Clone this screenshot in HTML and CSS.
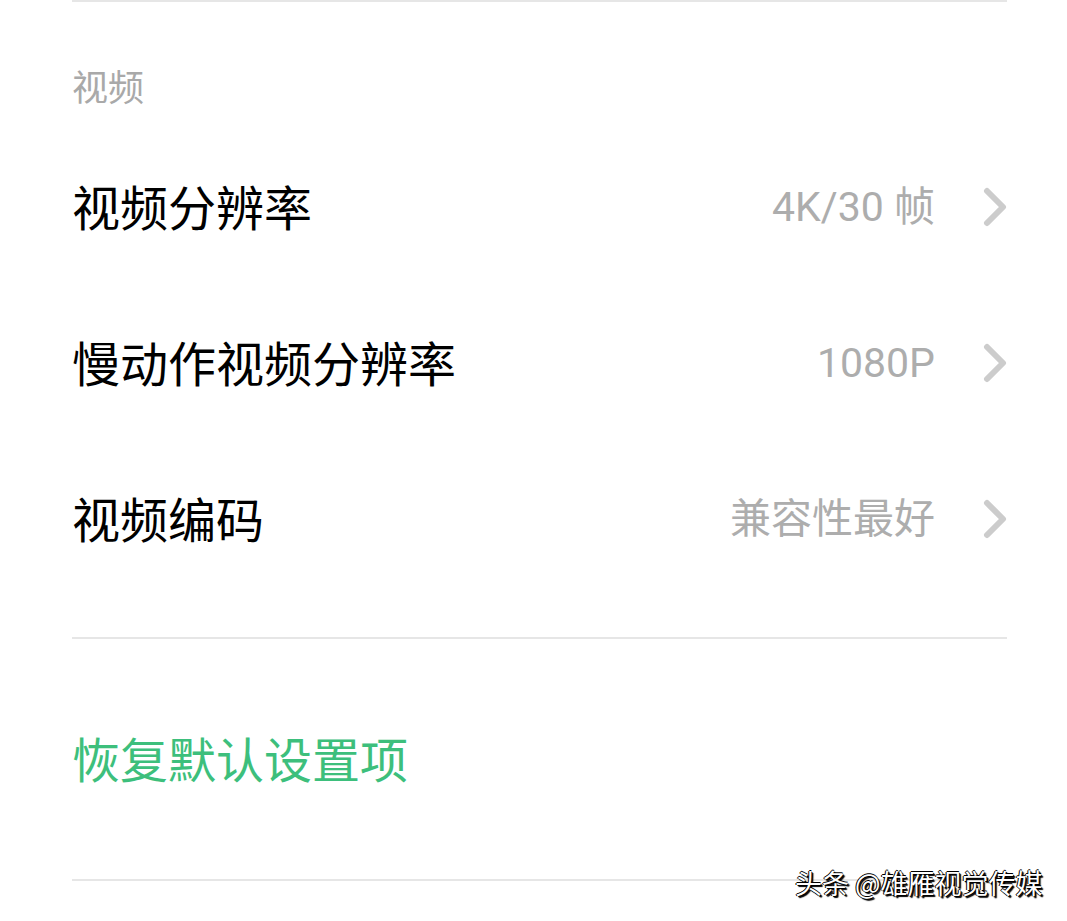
FILE: index.html
```html
<!DOCTYPE html>
<html lang="zh">
<head>
<meta charset="utf-8">
<link rel="stylesheet" href="styles.css">
</head>
<body>
<div class="page">
  <div class="rule"></div>
  <div class="section-title">视频</div>
  <div class="row">
    <span class="label">视频分辨率</span>
    <span class="value">4K/30 帧</span>
    <svg class="chev" viewBox="0 0 24 40" width="24" height="40"><polyline points="4,4 20,20 4,36" fill="none" stroke="#cccccc" stroke-width="6" stroke-linecap="round" stroke-linejoin="round"/></svg>
  </div>
  <div class="row">
    <span class="label">慢动作视频分辨率</span>
    <span class="value">1080P</span>
    <svg class="chev" viewBox="0 0 24 40" width="24" height="40"><polyline points="4,4 20,20 4,36" fill="none" stroke="#cccccc" stroke-width="6" stroke-linecap="round" stroke-linejoin="round"/></svg>
  </div>
  <div class="row">
    <span class="label">视频编码</span>
    <span class="value">兼容性最好</span>
    <svg class="chev" viewBox="0 0 24 40" width="24" height="40"><polyline points="4,4 20,20 4,36" fill="none" stroke="#cccccc" stroke-width="6" stroke-linecap="round" stroke-linejoin="round"/></svg>
  </div>
  <div class="spacer"></div>
  <div class="rule"></div>
  <div class="restore">恢复默认设置项</div>
  <div class="rule"></div>
</div>
<div class="watermark">头条 @雄雁视觉传媒</div>
</body>
</html>
```
FILE: styles.css
```css
html, body {
  margin: 0;
  padding: 0;
  background: #ffffff;
}
body {
  font-family: "Noto Sans CJK SC", "Noto Sans", sans-serif;
  width: 1067px;
  height: 921px;
  overflow: hidden;
  position: relative;
}
.page {
  padding: 0 60px 0 72px;
}
.rule {
  height: 2px;
  background: #e6e6e6;
}
.section-title {
  height: 127px;
  box-sizing: border-box;
  padding-top: 58px;
  font-size: 36px;
  line-height: 50px;
  color: #a9a9a9;
}
.row {
  height: 156px;
  box-sizing: border-box;
  padding-bottom: 4px;
  display: flex;
  align-items: center;
}
.label {
  flex: 1;
  font-size: 48px;
  color: #000000;
  line-height: 60px;
}
.value {
  font-family: "Roboto", "Noto Sans CJK SC", sans-serif;
  font-size: 41px;
  color: #adadad;
  line-height: 60px;
  position: relative;
  top: 2px;
}
.chev {
  margin-left: 48px;
  flex: none;
  position: relative;
  top: 2px;
}
.spacer {
  height: 40px;
}
.restore {
  height: 240px;
  box-sizing: border-box;
  padding-bottom: 4px;
  display: flex;
  align-items: center;
  font-size: 48px;
  color: #3dbf7c;
}
.watermark {
  position: absolute;
  left: 795px;
  top: 863px;
  font-size: 27px;
  line-height: 40px;
  color: #ffffff;
  text-shadow: 1px 1px 0 #000, -1px 0 0 #000, 0 -1px 0 #000, 2px 2px 1px #000;
}
```
